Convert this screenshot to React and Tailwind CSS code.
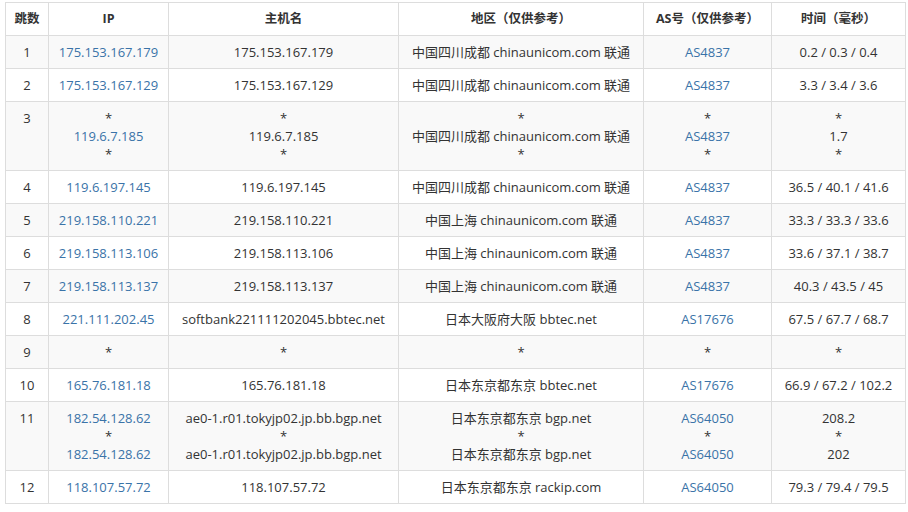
import React from 'react';

const rows = [
  ['1', ['175.153.167.179'], ['175.153.167.179'], ['中国四川成都 chinaunicom.com 联通'], ['AS4837'], ['0.2 / 0.3 / 0.4']],
  ['2', ['175.153.167.129'], ['175.153.167.129'], ['中国四川成都 chinaunicom.com 联通'], ['AS4837'], ['3.3 / 3.4 / 3.6']],
  ['3', ['*', '119.6.7.185', '*'], ['*', '119.6.7.185', '*'], ['*', '中国四川成都 chinaunicom.com 联通', '*'], ['*', 'AS4837', '*'], ['*', '1.7', '*']],
  ['4', ['119.6.197.145'], ['119.6.197.145'], ['中国四川成都 chinaunicom.com 联通'], ['AS4837'], ['36.5 / 40.1 / 41.6']],
  ['5', ['219.158.110.221'], ['219.158.110.221'], ['中国上海 chinaunicom.com 联通'], ['AS4837'], ['33.3 / 33.3 / 33.6']],
  ['6', ['219.158.113.106'], ['219.158.113.106'], ['中国上海 chinaunicom.com 联通'], ['AS4837'], ['33.6 / 37.1 / 38.7']],
  ['7', ['219.158.113.137'], ['219.158.113.137'], ['中国上海 chinaunicom.com 联通'], ['AS4837'], ['40.3 / 43.5 / 45']],
  ['8', ['221.111.202.45'], ['softbank221111202045.bbtec.net'], ['日本大阪府大阪 bbtec.net'], ['AS17676'], ['67.5 / 67.7 / 68.7']],
  ['9', ['*'], ['*'], ['*'], ['*'], ['*']],
  ['10', ['165.76.181.18'], ['165.76.181.18'], ['日本东京都东京 bbtec.net'], ['AS17676'], ['66.9 / 67.2 / 102.2']],
  ['11', ['182.54.128.62', '*', '182.54.128.62'], ['ae0-1.r01.tokyjp02.jp.bb.bgp.net', '*', 'ae0-1.r01.tokyjp02.jp.bb.bgp.net'], ['日本东京都东京 bgp.net', '*', '日本东京都东京 bgp.net'], ['AS64050', '*', 'AS64050'], ['208.2', '*', '202']],
  ['12', ['118.107.57.72'], ['118.107.57.72'], ['日本东京都东京 rackip.com'], ['AS64050'], ['79.3 / 79.4 / 79.5']],
];

const heads = ['跳数', 'IP', '主机名', '地区（仅供参考）', 'AS号（仅供参考）', '时间（毫秒）'];
const widths = ['w-[43px]', 'w-[120px]', 'w-[230px]', 'w-[245px]', 'w-[128px]', 'w-[134px]'];

const Lines = ({ items, link }) => (
  <>
    {items.map((t, i) => (
      <div key={i} className={link && t !== '*' ? 'text-[#3a73a8]' : ''}>{t}</div>
    ))}
  </>
);

const cell = 'border border-[#ddd] text-center align-top px-1 pt-[7px] pb-[7px] leading-[18px]';

export default function App() {
  return (
    <div className="w-[908px] h-[512px] bg-white pl-[5px] pt-[2px] text-[13px] text-[#333]" style={{ fontFamily: '"Open Sans","Noto Sans CJK SC",sans-serif' }}>
      <table className="border-collapse table-fixed w-[900px]">
        <thead>
          <tr>
            {heads.map((h, i) => (
              <th key={i} className={`${widths[i]} border border-[#ddd] h-[33px] text-center font-bold text-[12.5px] leading-[18px]`}>{h}</th>
            ))}
          </tr>
        </thead>
        <tbody>
          {rows.map((r, idx) => (
            <tr key={r[0]} className={idx % 2 === 0 ? 'bg-[#f9f9f9]' : 'bg-white'}>
              <td className={cell}>{r[0]}</td>
              <td className={cell}><Lines items={r[1]} link /></td>
              <td className={cell}><Lines items={r[2]} /></td>
              <td className={cell}><Lines items={r[3]} /></td>
              <td className={cell}><Lines items={r[4]} link /></td>
              <td className={cell}><Lines items={r[5]} /></td>
            </tr>
          ))}
        </tbody>
      </table>
    </div>
  );
}
